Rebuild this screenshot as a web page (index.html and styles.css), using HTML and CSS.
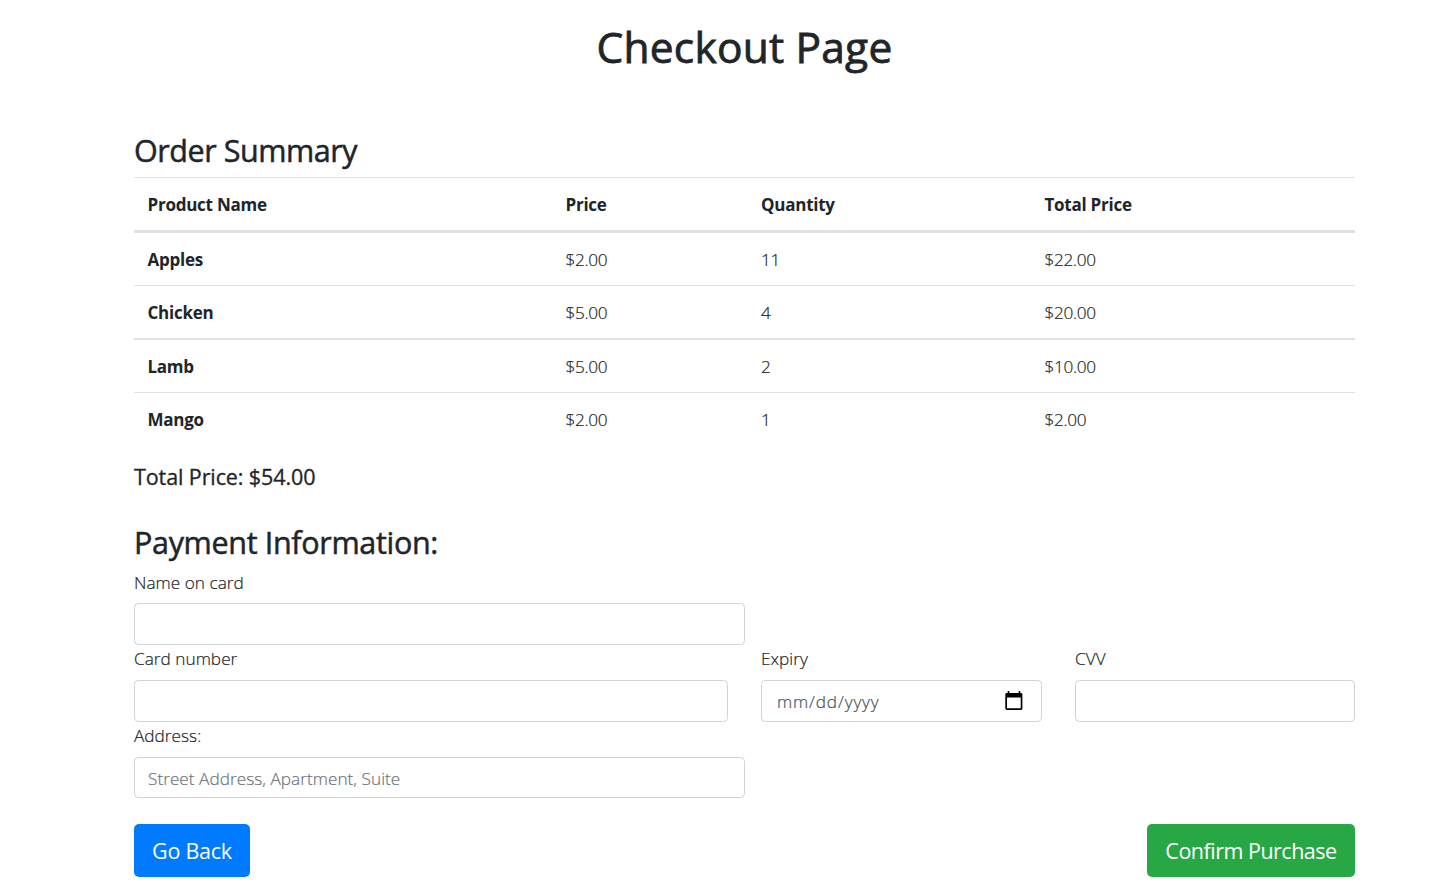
FILE: index.html
```html
<!DOCTYPE html>
<html lang="en">
<head>
<meta charset="utf-8">
<title>Checkout Page</title>
<link rel="stylesheet" href="styles.css">
</head>
<body>
<main class="container">
  <h1 class="page-title">Checkout Page</h1>
  <h2 class="section-title">Order Summary</h2>
  <table class="table">
    <colgroup><col class="col-name"><col class="col-price"><col class="col-quantity"><col class="col-total"></colgroup>
    <thead>
      <tr><th>Product Name</th><th>Price</th><th>Quantity</th><th>Total Price</th></tr>
    </thead>
    <tbody>
      <tr><th>Apples</th><td>$2.00</td><td>11</td><td>$22.00</td></tr>
      <tr><th>Chicken</th><td>$5.00</td><td>4</td><td>$20.00</td></tr>
      <tr class="row-strong"><th>Lamb</th><td>$5.00</td><td>2</td><td>$10.00</td></tr>
      <tr><th>Mango</th><td>$2.00</td><td>1</td><td>$2.00</td></tr>
    </tbody>
  </table>
  <h5 class="order-total">Total Price: $54.00</h5>
  <h2 class="section-title payment-title">Payment Information:</h2>
  <form class="payment">
    <label class="label label-first" for="name">Name on card</label>
    <input class="control half" id="name" type="text">
    <div class="card-row">
      <div class="field"><label class="label" for="number">Card number</label><input class="control" id="number" type="text"></div>
      <div class="field"><span class="label">Expiry</span>
        <div class="control date" tabindex="0"><span class="date-text">mm/dd/yyyy</span>
          <svg class="calendar" width="18" height="20" viewBox="0 0 18 20"><path fill="#000" fill-rule="evenodd" d="M2.700 0h1.600v2h9.400V0h1.600v2H16a1.400 1.400 0 0 1 1.400 1.400v14.200A1.400 1.400 0 0 1 16 19H1.700A1.400 1.400 0 0 1 .3 17.600V3.400A1.400 1.400 0 0 1 1.700 2h1zM2 6.500v10.800h13.700V6.500z"/></svg>
        </div>
      </div>
      <div class="field"><label class="label" for="cvv">CVV</label><input class="control" id="cvv" type="text"></div>
    </div>
    <label class="label" for="address">Address:</label>
    <input class="control half address" id="address" type="text" placeholder="Street Address, Apartment, Suite">
    <div class="actions">
      <button class="btn btn-primary" type="button">Go Back</button>
      <button class="btn btn-success" type="button">Confirm Purchase</button>
    </div>
  </form>
</main>
</body>
</html>
```
FILE: styles.css
```css
*, *::before, *::after { box-sizing: border-box; }

body {
  margin: 0;
  background: #fff;
  color: #212529;
  font: 300 17.200px/26px "Open Sans", "Noto Sans", sans-serif;
  letter-spacing: 0.03px;
  -webkit-text-stroke: 0.2px currentColor;
}

.container { width: 1221px; margin-left: 134px; }

h1, h2, h5 {
  margin: 0;
  font-weight: 500;
  -webkit-text-stroke: 0.5px currentColor;
}

.page-title {
  padding-top: 20px;
  height: 131px;
  font-size: 42.500px;
  line-height: 53px;
  letter-spacing: 0.200px;
  text-align: center;
  -webkit-text-stroke-width: 0.8px;
}

.section-title {
  height: 46px;
  font-size: 30.500px;
  line-height: 38px;
  letter-spacing: -0.450px;
}

.payment-title { letter-spacing: -0.330px; }

.table {
  width: 100%;
  table-layout: fixed;
  border-collapse: separate;
  border-spacing: 0;
}

.col-name { width: 418px; }
.col-price { width: 195.500px; }
.col-quantity { width: 283.500px; }

.table th, .table td {
  height: 53px;
  padding: 1px 13px 0 13.500px;
  border-top: 1px solid #dee2e6;
  text-align: left;
  vertical-align: middle;
}

.table td { letter-spacing: -0.300px; }
.table th { font-size: 17px; font-weight: 700; letter-spacing: -0.250px; -webkit-text-stroke-width: 0; }
.table thead th { height: 56px; padding-top: 2px; border-bottom: 3px solid #dee2e6; }
.table tbody tr:first-child > * { height: 52px; border-top: 0; }
.table .row-strong > * { height: 54px; border-top-width: 2px; }

.order-total {
  padding-top: 19px;
  height: 78px;
  font-size: 21.500px;
  line-height: 26px;
  letter-spacing: -0.100px;
  -webkit-text-stroke-width: 0.3px;
}

.payment { display: flex; flex-direction: column; margin-top: -1px; }

.label { display: block; height: 35px; padding-top: 1px; line-height: 26px; }
.label-first { padding-top: 2px; }

.control {
  display: block;
  width: 100%;
  height: 42px;
  padding: 0 13px;
  border: 1px solid #ced4da;
  border-radius: 4.400px;
  background: #fff;
  color: #495057;
  font: inherit;
  letter-spacing: inherit;
}

.control::placeholder { color: #6c757d; opacity: 1; }
.half { width: 611px; }
.address { height: 41px; padding-top: 2px; }

.card-row { display: grid; grid-template-columns: 594px 281px 280px; column-gap: 33px; }

.date { display: flex; align-items: center; justify-content: space-between; padding: 0 18px 0 15px; }
.date-text { padding-top: 1px; letter-spacing: 0.850px; }
.calendar { display: block; margin-bottom: 1px; }

.actions { display: flex; justify-content: space-between; margin-top: 26px; }

.btn {
  height: 53px;
  padding: 0;
  border: 0;
  border-radius: 5px;
  color: #fff;
  font: 400 21.500px/53px "Open Sans", "Noto Sans", sans-serif;
  letter-spacing: -0.500px;
  -webkit-text-stroke-width: 0;
}

.btn-primary { width: 116px; background: #007bff; letter-spacing: -0.250px; }
.btn-success { width: 208px; background: #28a745; }
```
